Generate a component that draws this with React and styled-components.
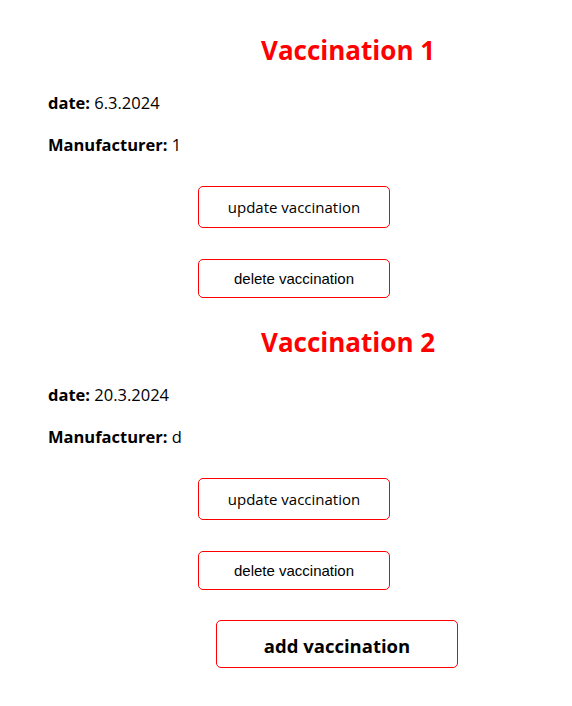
import React from "react";
import styled, { createGlobalStyle } from "styled-components";

const GlobalStyle = createGlobalStyle`
  body {
    margin: 8px;
    font-family: "Open Sans", "Noto Sans", sans-serif;
    color: #000;
    background: #fff;
  }
`;

const Page = styled.div`
  display: flex;
  flex-direction: column;
  padding-left: 40px;
`;

const Card = styled.section`
  display: flex;
  flex-direction: column;
  align-items: flex-start;
`;

const Title = styled.h2`
  margin: ${(p) => (p.first ? "24px" : "26px")} 0 0 213px;
  font-size: 26px;
  line-height: 36px;
  font-weight: 700;
  color: #ff0000;
`;

const Field = styled.p`
  margin: ${(p) => p.top}px 0 0;
  font-size: 16.5px;
  line-height: 22px;
`;

const Label = styled.b`
  font-weight: 700;
`;

const Button = styled.button`
  margin: ${(p) => p.top}px 0 0 150px;
  width: 192px;
  height: ${(p) => p.h}px;
  border: 1px solid #ff0000;
  border-radius: 5px;
  background: #fff;
  color: #000;
  cursor: pointer;
  font-family: ${(p) => (p.plain ? '"Liberation Sans", Arial, sans-serif' : '"Open Sans", sans-serif')};
  font-size: ${(p) => (p.plain ? "15px" : "15px")};
`;

const AddButton = styled.button`
  margin: 30px 0 0 168px;
  width: 242px;
  height: 48px;
  padding-top: 3px;
  border: 1px solid #ff0000;
  border-radius: 5px;
  background: #fff;
  color: #000;
  font-family: "Open Sans", sans-serif;
  font-size: 18.5px;
  font-weight: 700;
  cursor: pointer;
  align-self: flex-start;
`;

const vaccinations = [
  { id: 1, date: "6.3.2024", manufacturer: "1" },
  { id: 2, date: "20.3.2024", manufacturer: "d" },
];

const App = () => {
  return (
    <>
      <GlobalStyle />
      <Page>
        {vaccinations.map((v, index) => (
          <Card key={v.id}>
            <Title first={index === 0}>Vaccination {v.id}</Title>
            <Field top={24}>
              <Label>date:</Label> {v.date}
            </Field>
            <Field top={20}>
              <Label>Manufacturer:</Label> {v.manufacturer}
            </Field>
            <Button top={30} h={42}>update vaccination</Button>
            <Button top={31} h={39} plain>
              delete vaccination
            </Button>
          </Card>
        ))}
        <AddButton>add vaccination</AddButton>
      </Page>
    </>
  );
};

export default App;
